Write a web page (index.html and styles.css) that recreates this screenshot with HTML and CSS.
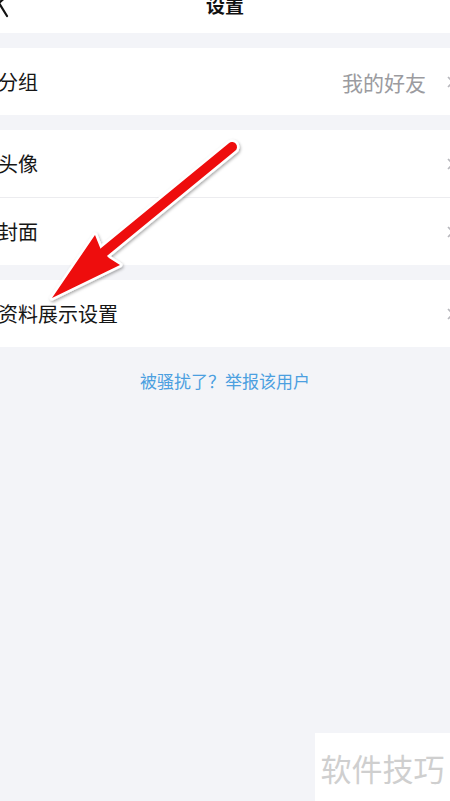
FILE: index.html
```html
<!DOCTYPE html>
<html lang="zh-CN">
<head>
<meta charset="utf-8">
<link rel="stylesheet" href="styles.css">
</head>
<body>
<div class="page">
  <header class="topbar">
    <svg class="back" width="12" height="24" viewBox="0 0 12 24"><path d="M9 -6 L-1 3 L7 16" fill="none" stroke="#111" stroke-width="2.2" stroke-linecap="round" stroke-linejoin="round"/></svg>
    <div class="title">设置</div>
  </header>

  <section class="group">
    <div class="row">
      <span class="label">分组</span>
      <span class="value">我的好友</span>
      <svg class="chev" width="10" height="14" viewBox="0 0 10 14"><path d="M2 2 L7 7 L2 12" fill="none" stroke="#b8b8bd" stroke-width="1.6"/></svg>
    </div>
  </section>

  <section class="group">
    <div class="row divided">
      <span class="label">头像</span>
      <svg class="chev" width="10" height="14" viewBox="0 0 10 14"><path d="M2 2 L7 7 L2 12" fill="none" stroke="#b8b8bd" stroke-width="1.6"/></svg>
    </div>
    <div class="row">
      <span class="label">封面</span>
      <svg class="chev" width="10" height="14" viewBox="0 0 10 14"><path d="M2 2 L7 7 L2 12" fill="none" stroke="#b8b8bd" stroke-width="1.6"/></svg>
    </div>
  </section>

  <section class="group">
    <div class="row">
      <span class="label">资料展示设置</span>
      <svg class="chev" width="10" height="14" viewBox="0 0 10 14"><path d="M2 2 L7 7 L2 12" fill="none" stroke="#b8b8bd" stroke-width="1.6"/></svg>
    </div>
  </section>

  <div class="report">被骚扰了？举报该用户</div>

  <svg class="arrow" width="450" height="801" viewBox="0 0 450 801">
    <defs>
      <filter id="sh" x="-20%" y="-20%" width="140%" height="140%">
        <feDropShadow dx="1" dy="1.5" stdDeviation="1.5" flood-color="#000" flood-opacity="0.35"/>
      </filter>
    </defs>
    <g filter="url(#sh)">
      <line x1="232" y1="147" x2="104" y2="252" stroke="#fff" stroke-width="15" stroke-linecap="round"/>
      <polygon points="52,298 95,235 101,250 109,258 120,265" fill="#fff" stroke="#fff" stroke-width="5" stroke-linejoin="round"/>
      <line x1="232" y1="147" x2="104" y2="252" stroke="#ee0c0c" stroke-width="10" stroke-linecap="round"/>
      <polygon points="52,298 95,235 101,250 109,258 120,265" fill="#ee0c0c"/>
    </g>
  </svg>

  <div class="watermark">软件技巧</div>
</div>
</body>
</html>
```

FILE: styles.css
```css
* { box-sizing: border-box; }
html, body {
  margin: 0;
  padding: 0;
}
body {
  width: 450px;
  height: 801px;
  overflow: hidden;
  background: #f3f4f8;
  font-family: "Noto Sans CJK SC", "Noto Sans", sans-serif;
}
.page {
  position: relative;
  width: 450px;
  height: 801px;
}
.topbar {
  position: relative;
  height: 33px;
  background: #fff;
  display: flex;
  justify-content: center;
  align-items: flex-start;
}
.back {
  position: absolute;
  left: 0;
  top: 0;
}
.title {
  font-size: 19px;
  font-weight: 700;
  color: #111;
  line-height: 20px;
  margin-top: -5px;
}
.group {
  margin-top: 15px;
  background: #fff;
}
.row {
  height: 67px;
  display: flex;
  align-items: center;
  padding-left: 0;
}
.row.divided {
  border-bottom: 1px solid #ececef;
  height: 68px;
}
.label {
  flex: 1;
  font-size: 20px;
  color: #161616;
  margin-left: -2px;
}
.value {
  font-size: 21px;
  color: #9b9ba0;
  margin-right: 20px;
}
.chev {
  margin-right: -6px;
  flex: none;
}
.report {
  margin-top: 24px;
  text-align: center;
  font-size: 17px;
  color: #4b9fe0;
  line-height: 20px;
}
.arrow {
  position: absolute;
  left: 0;
  top: 0;
  pointer-events: none;
}
.watermark {
  position: absolute;
  right: 0;
  bottom: 0;
  width: 135px;
  height: 68px;
  background: #fff;
  color: #cfcfcf;
  font-size: 31px;
  display: flex;
  align-items: center;
  justify-content: center;
  letter-spacing: 0;
}
```
